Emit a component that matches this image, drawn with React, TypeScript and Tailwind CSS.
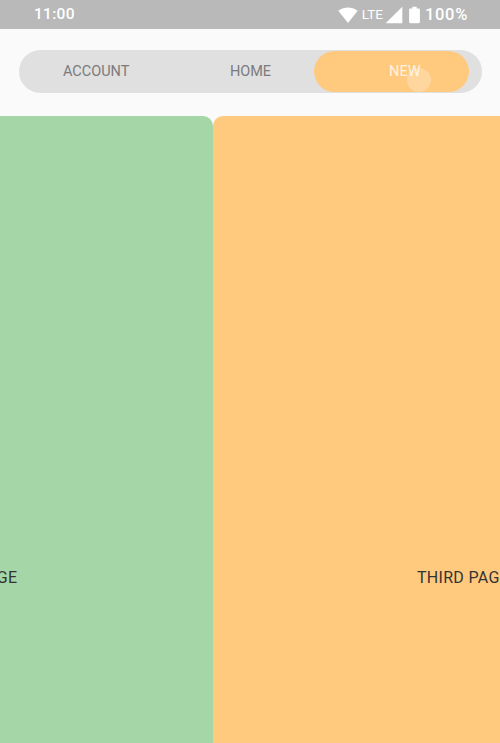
import React from 'react';

const tabs = ['ACCOUNT', 'HOME', 'NEW'];

function StatusBar() {
  return (
    <div className="flex h-[29px] items-center justify-between bg-[#b9b9b9] pl-[34px] pr-[32px] pt-px text-white">
      <span className="text-[15.5px] font-medium tracking-[0.3px]">11:00</span>
      <div className="flex items-center">
        {/* wifi */}
        <svg viewBox="0 0 24 24" className="h-[20px] w-[20px]" fill="currentColor">
          <path d="M12.01 21.49L23.64 7c-.45-.34-4.93-4-11.64-4C5.28 3 .81 6.66.36 7l11.63 14.49.01.01.01-.01z" />
        </svg>
        <span className="ml-[4px] text-[13.5px] leading-none">LTE</span>
        {/* signal */}
        <svg viewBox="0 0 24 24" className="ml-[1px] h-[20px] w-[20px]" fill="currentColor">
          <path d="M2 22h20V2z" />
        </svg>
        {/* battery */}
        <svg viewBox="6 1 12 22" preserveAspectRatio="none" className="ml-[4px] h-[18px] w-[13px]" fill="currentColor">
          <path d="M15.67 4H14V2h-4v2H8.33C7.6 4 7 4.6 7 5.33v15.33C7 21.4 7.6 22 8.33 22h7.33c.74 0 1.34-.6 1.34-1.33V5.33C17 4.6 16.4 4 15.67 4z" />
        </svg>
        <span className="ml-[4px] text-[16.5px] font-medium tracking-[0.7px]">100%</span>
      </div>
    </div>
  );
}

function TabBar() {
  return (
    <div className="pb-[23px] pl-[19px] pr-[18px] pt-[21px]">
      <div className="relative grid h-[43px] grid-cols-3 rounded-full bg-[#e0e0e0] text-[14.5px] text-[#7b7b7b]">
        {/* indicator, caught mid-slide */}
        <div className="absolute left-[295px] top-px h-[41px] w-[155px] rounded-full bg-[#ffc97e]" />
        {tabs.map((tab, i) => (
          <div
            key={tab}
            className={`relative flex items-center justify-center ${i === 2 ? 'text-[#fff3e0]' : ''}`}
          >
            {tab}
          </div>
        ))}
        {/* touch ripple */}
        <div className="absolute left-[388px] top-[18px] h-[24px] w-[24px] rounded-full bg-white/25" />
      </div>
    </div>
  );
}

function Page({ label, color }: { label: string; color: string }) {
  return (
    <div className={`flex h-[627px] w-[500px] shrink-0 justify-center rounded-t-[10px] pt-[453px] text-[16px] tracking-[0.3px] text-[#333333] ${color}`}>
      <span className="whitespace-nowrap leading-[18px]">{label}</span>
    </div>
  );
}

export default function App() {
  return (
    <div className="h-[743px] w-[500px] overflow-hidden bg-[#fafafa] font-['Roboto',sans-serif]">
      <StatusBar />
      <TabBar />
      {/* pager mid-swipe */}
      <div className="-ml-[287px] flex w-[1000px]">
        <Page label="SECOND PAGE" color="bg-[#a5d6a7]" />
        <Page label="THIRD PAGE" color="bg-[#ffc97e]" />
      </div>
    </div>
  );
}
